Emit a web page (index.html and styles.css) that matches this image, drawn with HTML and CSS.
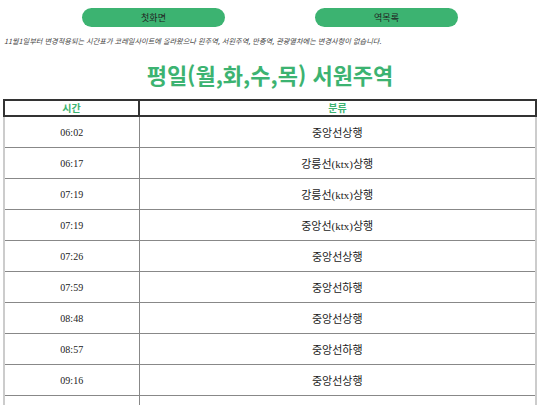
FILE: index.html
```html
<!DOCTYPE html>
<html lang="ko">
<head>
<meta charset="utf-8">
<link rel="stylesheet" href="styles.css">
</head>
<body>
<div class="nav">
  <a class="btn">첫화면</a>
  <a class="btn">역목록</a>
</div>
<p class="note">11월1일부터 변경적용되는 시간표가 코레일사이트에 올라왔으나 원주역, 서원주역, 만종역, 관광열차에는 변경사항이 없습니다.</p>
<h1 class="title">평일(월,화,수,목) 서원주역</h1>
<table class="tt">
  <thead>
    <tr><th class="c1">시간</th><th>분류</th></tr>
  </thead>
  <tbody>
    <tr><td class="time">06:02</td><td>중앙선상행</td></tr>
    <tr><td class="time">06:17</td><td>강릉선(ktx)상행</td></tr>
    <tr><td class="time">07:19</td><td>강릉선(ktx)상행</td></tr>
    <tr><td class="time">07:19</td><td>중앙선(ktx)상행</td></tr>
    <tr><td class="time">07:26</td><td>중앙선상행</td></tr>
    <tr><td class="time">07:59</td><td>중앙선하행</td></tr>
    <tr><td class="time">08:48</td><td>중앙선상행</td></tr>
    <tr><td class="time">08:57</td><td>중앙선하행</td></tr>
    <tr><td class="time">09:16</td><td>중앙선상행</td></tr>
    <tr><td class="time"></td><td></td></tr>
  </tbody>
</table>
</body>
</html>
```

FILE: styles.css
```css
html, body {
  margin: 0;
  padding: 0;
  background: #fff;
}
body {
  font-family: "Liberation Serif", "Noto Sans CJK KR", serif;
  color: #222;
}
.nav {
  display: flex;
  justify-content: center;
  gap: 90px;
  padding-top: 8px;
}
.btn {
  display: flex;
  align-items: center;
  justify-content: center;
  width: 143px;
  height: 19px;
  border-radius: 10px;
  background: #3cb371;
  color: #222;
  font-family: "Noto Sans CJK KR", sans-serif;
  font-size: 9px;
}
.note {
  margin: 9px 0 0 4px;
  font-family: "Noto Sans CJK KR", sans-serif;
  font-style: italic;
  font-size: 7.2px;
  color: #444;
  line-height: 10px;
}
.title {
  margin: 13px 0 0;
  text-align: center;
  font-family: "Noto Sans CJK KR", sans-serif;
  font-weight: bold;
  font-size: 22px;
  line-height: 30px;
  color: #3cb371;
}
.tt {
  width: 534px;
  margin: 10px 3px 0;
  border-collapse: collapse;
}
.tt th {
  border: 2px solid #333;
  font-family: "Noto Sans CJK KR", sans-serif;
  font-size: 10px;
  font-weight: bold;
  color: #3cb371;
  height: 12px;
  line-height: 12px;
  padding: 1px 0;
}
.tt th.c1 {
  width: 133px;
}
.tt td {
  border: 1px solid #888;
  height: 30px;
  padding: 0;
  text-align: center;
  font-size: 11px;
  color: #222;
}
.tt td:first-child {
  border-left: 2px solid #ccc;
}
.tt td:last-child {
  border-right: 2px solid #ccc;
}
.tt td.time {
  font-size: 10px;
}
```
